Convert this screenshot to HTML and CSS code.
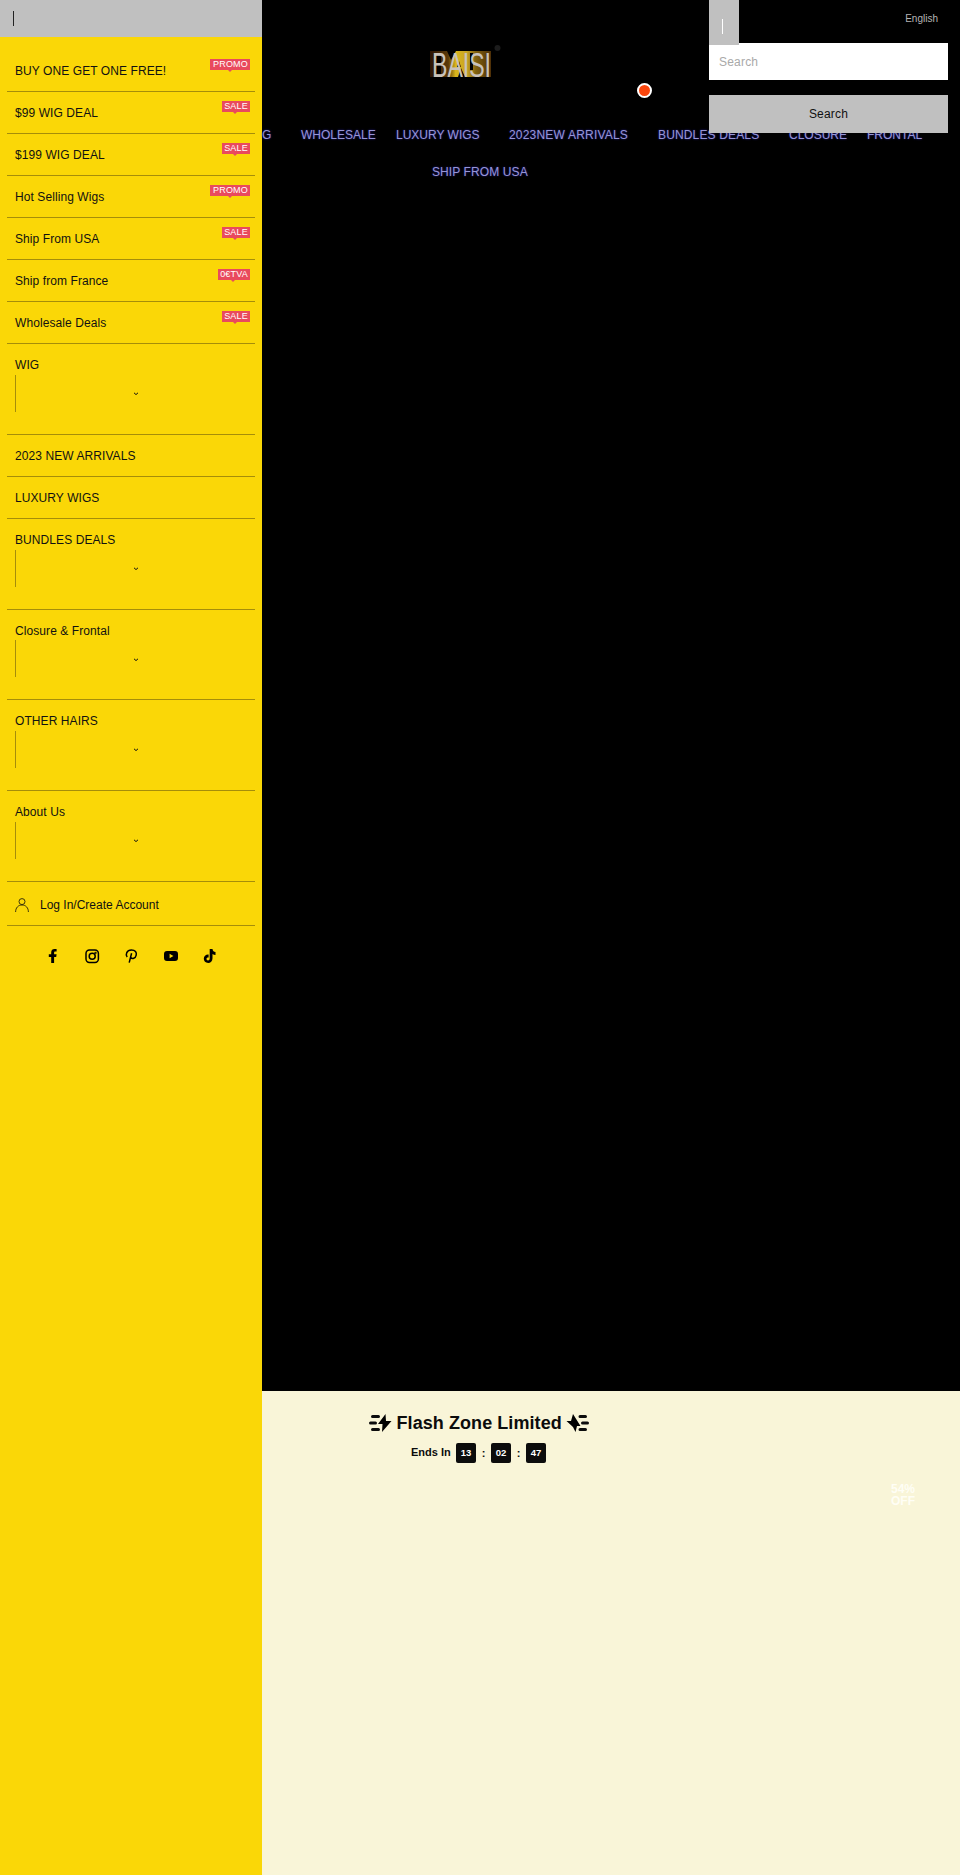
FILE: index.html
```html
<!DOCTYPE html>
<html lang="en">
<head>
<meta charset="utf-8">
<title>BAISI</title>
<link rel="stylesheet" href="styles.css">
</head>
<body>
<div class="page">
  <aside class="drawer">
    <div class="drawer-head"><span class="caret"></span></div>
    <ul class="menu">
      <li class="row">BUY ONE GET ONE FREE!<span class="tag">PROMO</span></li>
      <li class="row">$99 WIG DEAL<span class="tag">SALE</span></li>
      <li class="row">$199 WIG DEAL<span class="tag">SALE</span></li>
      <li class="row">Hot Selling Wigs<span class="tag">PROMO</span></li>
      <li class="row">Ship From USA<span class="tag">SALE</span></li>
      <li class="row">Ship from France<span class="tag">0€TVA</span></li>
      <li class="row">Wholesale Deals<span class="tag">SALE</span></li>
      <li class="row tall">WIG<div class="toggle"><svg viewBox="0 0 6 4"><path d="M1 .8 3 2.6 5 .8"/></svg></div></li>
      <li class="row">2023 NEW ARRIVALS</li>
      <li class="row">LUXURY WIGS</li>
      <li class="row tall">BUNDLES DEALS<div class="toggle"><svg viewBox="0 0 6 4"><path d="M1 .8 3 2.6 5 .8"/></svg></div></li>
      <li class="row tall">Closure &amp; Frontal<div class="toggle"><svg viewBox="0 0 6 4"><path d="M1 .8 3 2.6 5 .8"/></svg></div></li>
      <li class="row tall">OTHER HAIRS<div class="toggle"><svg viewBox="0 0 6 4"><path d="M1 .8 3 2.6 5 .8"/></svg></div></li>
      <li class="row tall">About Us<div class="toggle"><svg viewBox="0 0 6 4"><path d="M1 .8 3 2.6 5 .8"/></svg></div></li>
      <li class="account"><svg class="user" viewBox="0 0 14 14"><circle cx="7" cy="3.6" r="3"/><path d="M.6 14C.6 9.8 3.2 7 7 7s6.4 2.8 6.4 7"/></svg>Log In/Create Account</li>
    </ul>
    <div class="social">
      <svg viewBox="0 0 16 16"><path d="M6.2 15V9H3.8V6.2h2.4V4.4C6.2 2.2 7.500 1 9.600 1h2v2.600h-1.200c-1 0-1.300.5-1.300 1.300v1.300h2.500L11.200 9H9.100v6z"/></svg>
      <svg viewBox="0 0 16 16" class="line"><rect x="2" y="2" width="12.400" height="12.400" rx="3.400"/><circle cx="8.200" cy="8.200" r="3"/><circle cx="11.500" cy="4.900" r=".4"/></svg>
      <svg viewBox="0 0 16 16" class="line"><path d="M4.200 9C2.200 6.500 3.600 2 8.400 2c4 0 5.400 2.500 4.800 5.200-.7 3.300-4 4.300-5.600 2M8.600 5.200 6.200 14.600"/></svg>
      <svg viewBox="0 0 16 16"><path fill-rule="evenodd" d="M4 3h8q3 0 3 3v4q0 3-3 3H4q-3 0-3-3V6q0-3 3-3zm2.600 2.800v4.500L10.400 8z"/></svg>
      <svg viewBox="0 0 16 16"><path d="M7.700 1h2.800c.2 1.900 1.300 2.900 3 3v2.900c-1.100 0-2.100-.3-3-.9v4.300c0 3-2 4.700-4.300 4.700C3.400 15 1.800 13 1.800 10.800c0-2.700 2.200-4.500 4.800-4.200v2.900c-1.200-.3-2.100.3-2.100 1.300 0 .9.700 1.600 1.500 1.600 1 0 1.700-.7 1.700-2z"/></svg>
    </div>
  </aside>
  <main class="main">
    <header class="hero">
      <div class="top">
        <div class="brand">
          <svg class="logo" viewBox="0 0 70 30">
            <defs><linearGradient id="gold"><stop offset="0" stop-color="#2b1405"/><stop offset=".3" stop-color="#5c3a09"/><stop offset=".42" stop-color="#d9b51c"/><stop offset=".6" stop-color="#c9a425"/><stop offset=".75" stop-color="#80610f"/><stop offset="1" stop-color="#4f3008"/></linearGradient></defs>
            <path fill="url(#gold)" d="M0 4h17l4 9 5-9h35v26H35l-4-9-3 9H0z"/>
            <path d="M7 7h4v20H7zM40 6h3v17h-3zM27 20l2-6 2 6z"/>
            <text x="2" y="29.500" textLength="59" lengthAdjust="spacingAndGlyphs">BAISI</text>
            <circle cx="67.500" cy="1" r="3"/>
          </svg>
          <span class="dot"></span>
        </div>
        <div class="tools">
          <div class="tool-head"><div class="grey-tab"><span></span></div><span class="lang">English</span></div>
          <div class="field">Search</div>
          <div class="button">Search</div>
        </div>
      </div>
      <nav class="nav"><span class="n0">G</span><span class="n1">WHOLESALE</span><span class="n2">LUXURY WIGS</span><span class="n3">2023NEW ARRIVALS</span><span class="n4">BUNDLES DEALS</span><span class="n5">CLOSURE</span><span class="n6">FRONTAL</span></nav>
      <div class="nav second"><span>SHIP FROM USA</span></div>
    </header>
    <section class="flash">
      <h2 class="title">
        <svg viewBox="0 0 23 18"><path class="bar" d="M3.500 2.500h6M1.500 9h5M3.500 15.500h6"/><path d="M16.500 0 9 10h4.500L13 18l9.500-11h-5.500z"/></svg>
        <span>Flash Zone Limited</span>
        <svg viewBox="0 0 23 18"><path class="bar" d="M14 2.500h5.500M16.500 9h5M14 15.500h5.500"/><path d="M7 0 14.500 12H11L9.500 18 7 13 .5 7H5z"/></svg>
      </h2>
      <div class="count"><span class="ends">Ends In</span><b>13</b><i>:</i><b>02</b><i>:</i><b>47</b></div>
      <div class="off">54%<br>OFF</div>
    </section>
  </main>
</div>
</body>
</html>
```
FILE: styles.css
```css
* { box-sizing: border-box; }
body { margin: 0; font: 12px/16px "Liberation Sans", Arial, sans-serif; color: #111; }
.page { display: flex; width: 960px; height: 1875px; overflow: hidden; background: #000; }

/* Side menu */
.drawer { width: 262px; flex: none; background: #fad707; }
.drawer-head { height: 37px; background: #c0c0c0; padding: 11px 0 0 13px; }
.caret { display: block; width: 1px; height: 15px; background: #222; }
.menu { list-style: none; margin: 0; padding: 13px 7px 0; }
.row { position: relative; height: 42.050px; padding: 13px 0 0 8px; border-bottom: 1px solid #a58d0a; letter-spacing: .08px; }
.tall { height: 90.700px; }
.toggle { height: 37px; margin-top: 1.500px; padding-top: 2px; border-left: 1px solid #a58d0a; display: flex; justify-content: center; align-items: center; }
.toggle svg { width: 6px; height: 4px; fill: none; stroke: #111; }
.tag { position: absolute; right: 5px; top: 9px; height: 11px; padding: 0 2px 0 2.500px; background: #e94a5d; color: #fff; font-size: 9px; line-height: 11px; letter-spacing: .2px; }
.tag::after { content: ""; position: absolute; left: 50%; top: 11px; margin-left: -2.500px; border: 2.500px solid transparent; border-bottom: 0; border-top-color: #e94a5d; }
.account { display: flex; align-items: center; height: 44.500px; padding: 2px 0 0 8px; border-bottom: 1px solid #a58d0a; }
.user { width: 14px; height: 14px; margin-right: 11px; fill: none; stroke: #29250b; stroke-width: .9; }
.social { display: flex; gap: 23.200px; padding: 22px 0 0 45px; }
.social svg { width: 16px; height: 16px; fill: #000; }
.social .line { fill: none; stroke: #000; stroke-width: 1.500; }

/* Header */
.main { flex: 1; min-width: 0; display: flex; flex-direction: column; }
.hero { height: 1390.500px; background: #000; }
.top { display: flex; justify-content: space-between; height: 133px; padding-right: 12px; position: relative; z-index: 1; }
.brand { display: flex; padding: 47px 0 0 168px; }
.logo { width: 70px; height: 30px; overflow: visible; }
.logo text { font: 400 35px "Liberation Sans", Arial, sans-serif; fill: #c9c2bb; }
.logo circle { fill: #1c1c1c; }
.dot { width: 15px; height: 15px; margin: 36px 0 0 137px; border: 2px solid #fff; border-radius: 50%; background: #fb460d; }
.tools { width: 239px; }
.tool-head { display: flex; justify-content: space-between; height: 43px; }
.grey-tab { width: 30px; height: 45px; background: #c0c0c0; padding: 19px 0 0 13px; position: relative; }
.grey-tab span { display: block; width: 1px; height: 15px; background: #fff; }
.lang { padding: 11px 10px 0 0; font-size: 10px; color: #b5b5b5; }
.field { height: 37px; background: #fff; color: #a9a9a9; padding: 11px 10px; letter-spacing: .2px; }
.button { height: 37.500px; margin-top: 15px; background: #c0c0c0; text-align: center; line-height: 38px; letter-spacing: .2px; }
.nav { display: flex; height: 16px; margin-top: -6px; color: #9695d6; text-shadow: 0 0 2px #2822a5; line-height: 16px; white-space: nowrap; }
.nav span { flex: none; }
.n0 { width: 39px; }
.n1 { width: 95px; }
.n2 { width: 113px; }
.n3 { width: 149px; letter-spacing: .2px; }
.n4 { width: 131px; letter-spacing: .15px; }
.n5 { width: 78px; }
.second { margin-top: 21px; padding-left: 170px; letter-spacing: .1px; }

/* Countdown */
.flash { flex: 1; background: #f9f5d8; color: #0c0c0c; font-weight: 700; }
.title { display: flex; align-items: center; gap: 4.500px; height: 26px; margin: 19.500px 0 0 107px; font-size: 18px; letter-spacing: .07px; line-height: 26px; white-space: nowrap; }
.title svg { width: 23px; height: 18px; flex: none; }
.bar { fill: none; stroke: #0c0c0c; stroke-width: 3; stroke-linecap: round; }
.count { display: flex; align-items: center; margin: 6.500px 0 0 149px; font-size: 11px; }
.ends { width: 45px; white-space: nowrap; line-height: 14px; padding-bottom: 2px; }
.count b { width: 20px; height: 20px; border-radius: 2px; background: #0c0c0c; color: #fff; font-size: 9.500px; line-height: 20px; text-align: center; }
.count i { width: 15px; font-style: normal; text-align: center; }
.off { width: 36px; margin: 20px 0 0 623px; color: #fffef5; line-height: 12px; text-align: center; }
```
